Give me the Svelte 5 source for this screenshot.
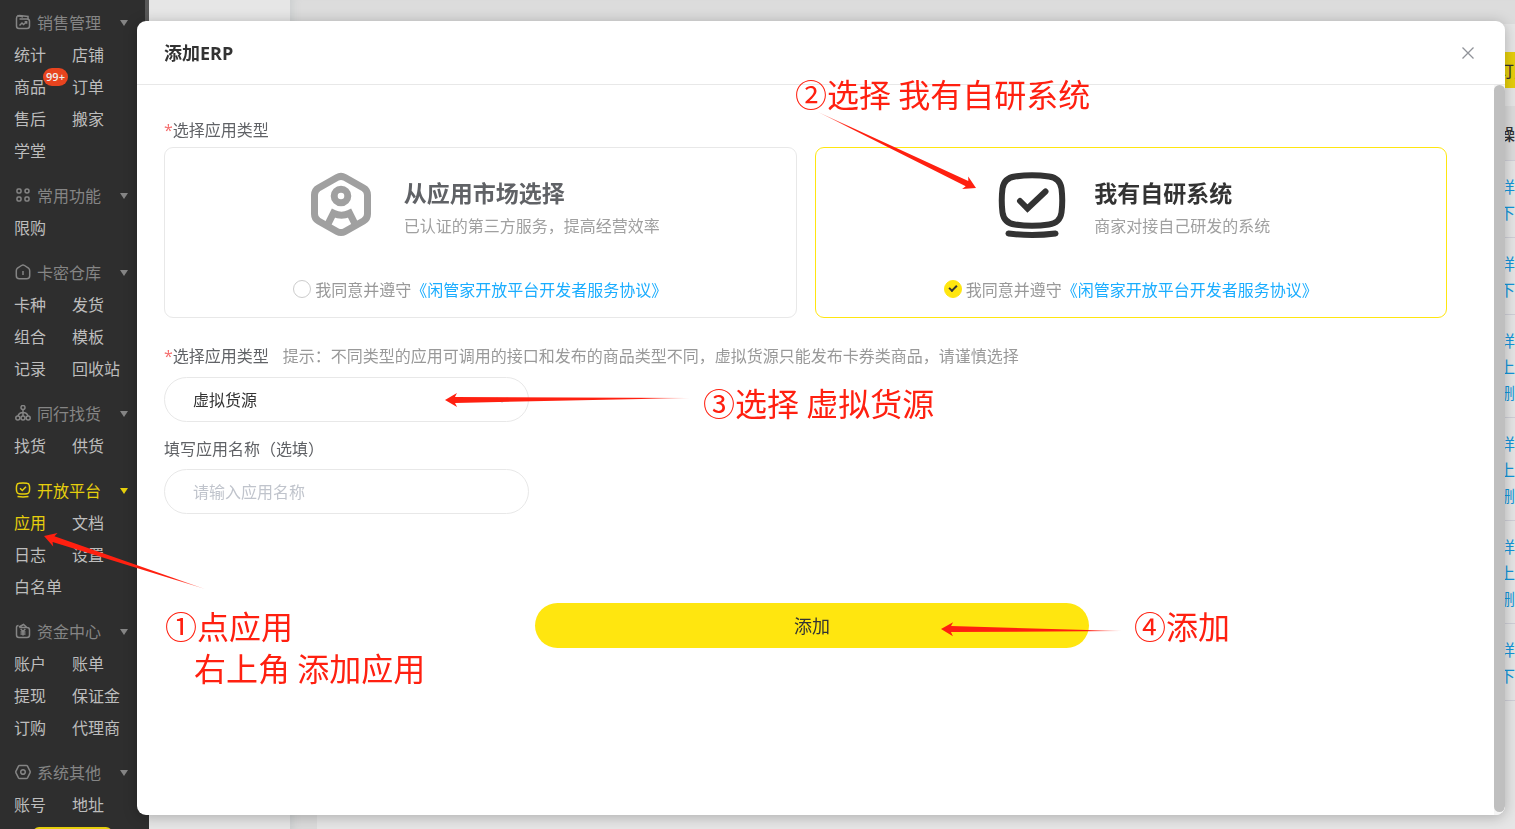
<script lang="ts">
	type Point = [number, number];

	const menu = [
		{
			title: '销售管理',
			icon: ['M4.500 5h7.500q2.500 0 2.500 2.500v4.500q0 2.500-2.500 2.500H4q-2.500 0-2.500-2.500V4.500q0-2 1.500-3l5 1.500', 'M3 2.500 4.500 1.500 13 2.500V5', 'M4.500 11.500 7 9l1.500 1.500L11.500 8M9.600 7.800h2v2'],
			items: ['统计', '店铺', '商品', '订单', '售后', '搬家', '学堂']
		},
		{
			title: '常用功能',
			icon: ['M2 3.200Q2 2 3.200 2h1.600Q6 2 6 3.200v1.600Q6 6 4.800 6H3.200Q2 6 2 4.800z', 'M10 4a2 2 0 1 0 4 0a2 2 0 1 0-4 0', 'M2 11.200Q2 10 3.200 10h1.600Q6 10 6 11.200v1.600Q6 14 4.800 14H3.200Q2 14 2 12.800z', 'M10 11.200Q10 10 11.200 10h1.600Q14 10 14 11.200v1.600Q14 14 12.800 14h-1.600Q10 14 10 12.800z'],
			items: ['限购']
		},
		{
			title: '卡密仓库',
			icon: ['M6.500 1.500Q8 .5 9.500 1.500l4 2.700q1.200 1 1.200 2.500v5q0 3-3 3H4.300q-3 0-3-3v-5q0-1.500 1.200-2.500z', 'M8 7v4'],
			items: ['卡种', '发货', '组合', '模板', '记录', '回收站']
		},
		{
			title: '同行找货',
			icon: ['M6 2.500a2 2 0 1 0 4 0a2 2 0 1 0-4 0', 'M.8 13a2 2 0 1 0 4 0a2 2 0 1 0-4 0', 'M6 13a2 2 0 1 0 4 0a2 2 0 1 0-4 0', 'M11.200 13a2 2 0 1 0 4 0a2 2 0 1 0-4 0', 'M8 4.500V11M3 11q1-3.500 5-3.500T13 11'],
			items: ['找货', '供货']
		},
		{
			title: '开放平台',
			icon: ['M4 1.300q4-.6 8 0 2 .2 2.300 2.200.6 3 0 6-.3 2-2.300 2.200-4 .6-8 0-2-.2-2.300-2.200-.6-3 0-6Q2 1.500 4 1.300z', 'M5 6.200 7.300 8.500 11 4.800', 'M2.500 14.500q5.500.8 11 0'],
			active: true,
			items: ['应用', '文档', '日志', '设置', '白名单']
		},
		{
			title: '资金中心',
			icon: ['M4.500 4.500h7.500q2.500 0 2.500 2.500v5q0 2.500-2.500 2.500H4q-2.500 0-2.500-2.500V4.500q0-2 2-2M4 4 8.500 1.500 12 4.500', 'M5.700 6 8 8.500 10.300 6M8 8.500v4M5.500 9h5M5.500 11h5'],
			items: ['账户', '账单', '提现', '保证金', '订购', '代理商']
		},
		{
			title: '系统其他',
			icon: ['M4.700 1.500h6.600q.8 0 1.200.7l2.500 5q.4.8 0 1.600l-2.500 5q-.4.7-1.200.7H4.700q-.8 0-1.200-.7L1 8.800Q.6 8 1 7.200l2.500-5q.4-.7 1.200-.7z', 'M5.700 8a2.300 2.300 0 1 0 4.600 0a2.300 2.300 0 1 0-4.600 0'],
			items: ['账号', '地址']
		}
	];

	const rows = [
		['详情', '下架'],
		['详情', '下架'],
		['详情', '上架', '删除'],
		['详情', '上架', '删除'],
		['详情', '上架', '删除'],
		['详情', '下架']
	];

	const arrows: { tip: Point; tail: Point }[] = [
		{ tip: [44, 536], tail: [205, 589] },
		{ tip: [976, 188], tail: [818, 112] },
		{ tip: [445, 400], tail: [690, 398] },
		{ tip: [941, 629], tail: [1122, 631] }
	];

	let source = $state('own');
	let kind = $state('virtual');
	let appName = $state('');

	// tapered arrow: wide at the head, vanishing at the tail
	function arrowPoints(tip: Point, tail: Point) {
		const len = Math.hypot(tail[0] - tip[0], tail[1] - tip[1]);
		const ux = (tail[0] - tip[0]) / len;
		const uy = (tail[1] - tip[1]) / len;
		const at = (along: number, side: number) =>
			`${tip[0] + ux * along - uy * side},${tip[1] + uy * along + ux * side}`;
		return [at(0, 0), at(12, 7), at(10, 3), at(len, 0), at(10, -3), at(12, -7)].join(' ');
	}
</script>

<div class="page">
	<nav class="sidebar">
		{#each menu as group}
			<section class="group" class:active={group.active}>
				<div class="group-title">
					<svg class="group-icon" viewBox="0 0 16 16">
						{#each group.icon as d}
							<path {d} />
						{/each}
					</svg>
					<span>{group.title}</span>
					<i class="caret"></i>
				</div>
				<div class="links">
					{#each group.items as item}
						<a href="#{item}" class:current={item === '应用'}>
							{item}{#if item === '商品'}<b class="badge">99+</b>{/if}
						</a>
					{/each}
				</div>
			</section>
		{/each}
		<div class="sidebar-foot"></div>
		<div class="thumb"></div>
	</nav>

	<div class="subnav"></div>

	<main class="main">
		<div class="panel">
			<div class="toolbar"><button class="order">订购</button></div>
			<table>
				<thead>
					<tr><th></th><th class="ops">操作</th></tr>
				</thead>
				<tbody>
					{#each rows as row}
						<tr>
							<td></td>
							<td class="ops">
								{#each row as op}<a href="#op">{op}</a>{/each}
							</td>
						</tr>
					{/each}
				</tbody>
			</table>
		</div>
	</main>
</div>

<div class="overlay">
	<div class="dialog" role="dialog" aria-labelledby="dialog-title">
		<header>
			<h2 id="dialog-title">添加ERP</h2>
			<button class="close" aria-label="关闭">
				<svg viewBox="0 0 12 12"><path d="M.5.5l11 11M11.500.5l-11 11" /></svg>
			</button>
		</header>
		<div class="body">
			<form>
				<div class="label"><em>*</em>选择应用类型</div>
				<div class="cards">
					<div class="card" class:selected={source === 'market'}>
						<div class="intro">
							<svg class="card-icon" viewBox="0 0 80 80">
								<path d="M36 13.500q4-2.200 8 0l18.500 10.500q4 2.300 4 7v19q0 4.700-4 7L44 67.500q-4 2.200-8 0L17.500 57q-4-2.300-4-7V31q0-4.700 4-7z" />
								<circle cx="40" cy="32" r="6.800" />
								<path d="M33 49.500q7.500 3.500 15 0M34 46 26.500 61M47 46l7.500 15" />
							</svg>
							<div class="words">
								<h3>从应用市场选择</h3>
								<p>已认证的第三方服务，提高经营效率</p>
							</div>
						</div>
						<div class="agree">
							<input type="radio" id="market" value="market" bind:group={source} />
							<label for="market">我同意并遵守</label><a href="#agreement">《闲管家开放平台开发者服务协议》</a>
						</div>
					</div>
					<div class="card" class:selected={source === 'own'}>
						<div class="intro">
							<svg class="card-icon" viewBox="0 0 80 80">
								<path d="M24 12.500q17-2.600 34 0 11 1.500 12.500 12 1.500 12 0 24-1.500 10.500-12.500 12-17 2.600-34 0-11-1.500-12.500-12-1.500-12 0-24 1.500-10.500 12.500-12z" />
								<path d="M29 37l7.500 7.500L54.500 27.500M17.500 69.500q23.500 3 47 0" stroke-linecap="round" />
							</svg>
							<div class="words">
								<h3>我有自研系统</h3>
								<p>商家对接自己研发的系统</p>
							</div>
						</div>
						<div class="agree">
							<input type="radio" id="own" value="own" bind:group={source} />
							<label for="own">我同意并遵守</label><a href="#agreement">《闲管家开放平台开发者服务协议》</a>
						</div>
					</div>
				</div>

				<div class="label row">
					<label for="kind"><em>*</em>选择应用类型</label>
					<span class="hint">提示：不同类型的应用可调用的接口和发布的商品类型不同，虚拟货源只能发布卡券类商品，请谨慎选择</span>
				</div>
				<div class="select">
					<select id="kind" class="field" bind:value={kind}>
						<option value="virtual">虚拟货源</option>
					</select>
					<svg viewBox="0 0 12 6"><path d="M1 .5l5 5 5-5" /></svg>
				</div>

				<label class="label" for="name">填写应用名称（选填）</label>
				<input id="name" class="field" type="text" placeholder="请输入应用名称" bind:value={appName} />

				<button class="submit" type="button">添加</button>
			</form>
			<div class="scrollbar"><div></div></div>
		</div>
	</div>
</div>

<div class="notes">
	<svg>
		<defs>
			{#each arrows as { tip, tail }, i}
				<linearGradient id="fade{i}" gradientUnits="userSpaceOnUse" x1={tip[0]} y1={tip[1]} x2={tail[0]} y2={tail[1]}>
					<stop offset="0.8" stop-color="#ff2010" />
					<stop offset="1" stop-color="#ff2010" stop-opacity="0.4" />
				</linearGradient>
			{/each}
		</defs>
		{#each arrows as { tip, tail }, i}
			<polygon points={arrowPoints(tip, tail)} fill="url(#fade{i})" />
		{/each}
	</svg>
	<p class="note one">①点应用<span>右上角 添加应用</span></p>
	<p class="note two">②选择 我有自研系统</p>
	<p class="note three">③选择 虚拟货源</p>
	<p class="note four">④添加</p>
</div>

<style>
	:global(body) {
		margin: 0;
		overflow: hidden;
		background: #dcdcdc;
		font-family: 'Noto Sans CJK SC', sans-serif;
		font-size: 16px;
		line-height: 24px;
	}

	a {
		text-decoration: none;
	}

	button,
	input,
	select {
		font: inherit;
		box-sizing: border-box;
	}

	svg {
		fill: none;
		stroke: currentColor;
	}

	.page {
		display: flex;
		height: 100vh;
		overflow: hidden;
	}

	/* sidebar */
	.sidebar {
		position: relative;
		box-sizing: border-box;
		flex: 0 0 149px;
		height: 100vh;
		padding-top: 6px;
		overflow: hidden;
		background: #2e2e2e;
	}

	.thumb {
		position: absolute;
		top: 0;
		right: 0;
		width: 4px;
		height: 90%;
		background: #585858;
	}

	.group {
		margin-bottom: 13px;
		color: #858585;
	}

	.group-title {
		display: flex;
		align-items: center;
		height: 32px;
		padding: 0 21px 0 15px;
	}

	.group-icon {
		width: 16px;
		height: 16px;
		margin-right: 6px;
		stroke-width: 1.5;
	}

	.caret {
		margin: 2px 0 0 auto;
		border: 4px solid transparent;
		border-top: 6px solid currentColor;
		border-bottom: 0;
	}

	.links {
		display: grid;
		grid-template-columns: 58px 58px;
		padding-left: 14px;
	}

	.links a {
		position: relative;
		line-height: 32px;
		white-space: nowrap;
		color: #bdbdbd;
	}

	.active,
	.links .current {
		color: #e6cf0c;
	}

	.badge {
		position: absolute;
		top: -2px;
		left: 29px;
		width: 25px;
		border-radius: 9px;
		background: #e8441f;
		color: #eee;
		font: 600 11px/18px 'Open Sans', sans-serif;
		text-align: center;
	}

	.sidebar-foot {
		height: 32px;
		margin: -6px 37px 0 33px;
		border-radius: 6px;
		background: #e6cf0c;
	}

	.subnav {
		flex: 0 0 141px;
		background: #e6e6e6;
	}

	/* page behind the dialog */
	.main {
		flex: 1;
		min-width: 0;
		padding: 24px 0 0 27px;
		background: #dcdcdc;
		box-shadow: inset 10px 0 10px -8px #c8cccd;
	}

	.panel {
		height: 100%;
		margin-right: -40px;
		background: #e6e6e6;
	}

	.toolbar {
		display: flex;
		justify-content: flex-end;
		padding: 28px 0 18px;
	}

	.order {
		width: 90px;
		height: 36px;
		padding: 0 0 0 33px;
		border: 0;
		background: #e6cf0c;
		color: #333;
		text-align: left;
	}

	table {
		width: 100%;
		border-collapse: collapse;
	}

	th {
		height: 54px;
		padding: 0;
		background: #dcdcdc;
		color: #303133;
		font-weight: 500;
		text-align: left;
	}

	td {
		padding: 12px 0;
		border-top: 1px solid #d0d0d8;
		border-bottom: 1px solid #d0d0d8;
	}

	.ops {
		width: 56px;
	}

	.ops a {
		display: block;
		color: #1296db;
		line-height: 26px;
	}

	/* dialog */
	.overlay {
		position: fixed;
		inset: 0;
		display: flex;
		padding: 21px 10px 14px 137px;
	}

	.dialog {
		flex: 1;
		display: flex;
		flex-direction: column;
		overflow: hidden;
		border-radius: 9px;
		background: #fff;
		box-shadow: 0 2px 14px rgba(0, 0, 0, 0.25);
	}

	header {
		display: flex;
		align-items: center;
		justify-content: space-between;
		height: 63px;
		padding: 0 27px;
		border-bottom: 1px solid #e8e8e8;
	}

	h2 {
		margin: 0;
		color: #333;
		font: 700 18px/24px 'Open Sans', 'Noto Sans CJK SC', sans-serif;
	}

	.close {
		display: flex;
		padding: 4px;
		border: 0;
		background: none;
		color: #909399;
	}

	.close svg {
		width: 12px;
		height: 12px;
		stroke-width: 1.3;
	}

	.body {
		flex: 1;
		display: flex;
		min-height: 0;
	}

	form {
		flex: 1;
		min-width: 0;
		padding: 32px 34px 0 27px;
	}

	.scrollbar {
		width: 11px;
		padding-bottom: 3px;
		background: #f5f5f5;
	}

	.scrollbar div {
		height: 100%;
		border-radius: 6px;
		background: #bfbfbf;
	}

	.label {
		display: block;
		color: #606266;
	}

	.label.row {
		display: flex;
		gap: 14px;
	}

	em {
		color: #f56c6c;
		font-family: 'Open Sans', sans-serif;
		font-style: normal;
	}

	.hint {
		color: #999;
	}

	.cards {
		display: grid;
		grid-template-columns: 1fr 1fr;
		gap: 18px;
		margin: 5px 13px 25px 0;
	}

	.card {
		display: flex;
		flex-direction: column;
		align-items: center;
		padding: 16px 0;
		border: 1px solid #e8e8e8;
		border-radius: 9px;
		color: #606266;
	}

	.card.selected {
		border-color: #ffe60f;
		color: #333;
	}

	.intro {
		display: flex;
		gap: 23px;
	}

	.card-icon {
		width: 80px;
		height: 80px;
		color: #a0a0a0;
		stroke-width: 7;
	}

	.selected .card-icon {
		color: #333;
		stroke-width: 6;
	}

	.words {
		padding-top: 11px;
	}

	h3 {
		margin: 0;
		font-size: 23px;
		line-height: 34px;
	}

	p {
		margin: 0;
	}

	.words p {
		line-height: 32px;
		color: #a0a0a0;
	}

	.agree {
		display: flex;
		align-items: center;
		margin-top: 33px;
		color: #999;
	}

	.agree a {
		color: #1aadff;
	}

	.agree input {
		position: relative;
		appearance: none;
		width: 18px;
		height: 18px;
		margin: 0 4px 0 0;
		border: 1px solid #ccc;
		border-radius: 50%;
	}

	.agree input:checked {
		border-color: #ffe60f;
		background: #ffe60f;
	}

	.agree input:checked::after {
		content: '';
		position: absolute;
		top: 4px;
		left: 4px;
		width: 6px;
		height: 3px;
		border: solid #333;
		border-width: 0 0 2px 2px;
		transform: rotate(-45deg);
	}

	.field {
		display: block;
		width: 365px;
		height: 45px;
		margin: 9px 0 14px;
		padding: 0 28px 2px;
		border: 1px solid #e8e8e8;
		border-radius: 23px;
		background: #fff;
		color: #333;
		outline: 0;
	}

	.field::placeholder {
		color: #c0c4cc;
		opacity: 1;
	}

	.select {
		position: relative;
		width: 365px;
	}

	.select select {
		padding-left: 24px;
		appearance: none;
	}

	.select svg {
		position: absolute;
		top: 20px;
		right: 21px;
		width: 12px;
		height: 6px;
		color: #c0c4cc;
	}

	.select select {
		padding-left: 28px;
	}

	.submit {
		display: block;
		width: 100%;
		max-width: 554px;
		height: 45px;
		margin: 89px auto 0;
		padding: 0 0 2px;
		border: 0;
		border-radius: 23px;
		background: #ffe60f;
		color: #333;
		font-size: 18px;
	}

	/* numbered walkthrough drawn over the page */
	.notes {
		position: fixed;
		inset: 0;
		pointer-events: none;
	}

	.notes svg {
		width: 100%;
		height: 100%;
		stroke: none;
	}

	.note {
		position: absolute;
		color: #ff2010;
		font-size: 32px;
		line-height: 42px;
		white-space: nowrap;
	}

	.note span {
		display: block;
		padding-left: 29px;
	}

	.one {
		top: 604px;
		left: 165px;
	}

	.two {
		top: 72px;
		left: 795px;
	}

	.three {
		top: 381px;
		left: 703px;
	}

	.four {
		top: 604px;
		left: 1134px;
	}
</style>
